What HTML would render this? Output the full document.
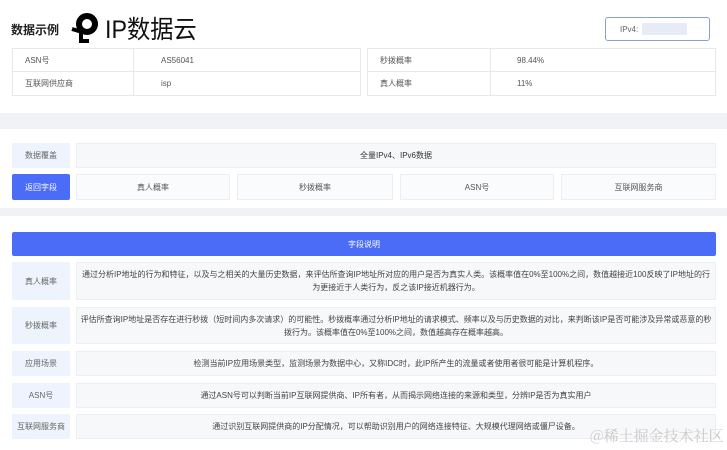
<!DOCTYPE html>
<html><head><meta charset="utf-8"><style>
*{box-sizing:border-box;margin:0;padding:0}
body{width:727px;height:450px;background:#fff;font-family:"Liberation Sans","Noto Sans CJK SC",sans-serif;color:#555;font-size:8px;position:relative;overflow:hidden}
.a{position:absolute}
.c{display:flex;align-items:center}
.cc{display:flex;align-items:center;justify-content:center;text-align:center}
.lab{background:#eef4fd;color:#666}
.box{background:#f7f8fa;border:1px solid #eceef2}
</style></head><body>
<div class="a" style="left:11px;top:21px;font-size:12px;font-weight:bold;color:#222">数据示例</div>
<svg class="a" style="left:70px;top:11px" width="32" height="32" viewBox="0 0 32 32">
<circle cx="17" cy="13" r="8" stroke="#000" stroke-width="6" fill="none"/>
<path d="M2 18l10 3" stroke="#000" stroke-width="4"/>
<path d="M11 22v8h8" stroke="#000" stroke-width="4" fill="none"/>
</svg>
<div class="a" style="left:105px;top:10px;font-size:25px;color:#111;transform:scaleX(0.93);transform-origin:left">IP数据云</div>
<div class="a cc" style="left:605px;top:17px;width:105px;height:24px;border:1px solid #8aa0d0;border-radius:3px;justify-content:flex-start;padding-left:14px;color:#666">IPv4:<span style="display:inline-block;width:45px;height:12px;background:#e6ecf6;margin-left:4px"></span></div>
<div class="a" style="left:12px;top:48px;width:349px;height:48px;border:1px solid #e8e8e8">
 <div class="a c" style="left:0;top:0;width:121px;height:23px;border-right:1px solid #e8e8e8;border-bottom:1px solid #e8e8e8;padding-left:12px">ASN号</div>
 <div class="a c" style="left:121px;top:0;width:227px;height:23px;border-bottom:1px solid #e8e8e8;padding-left:27px">AS56041</div>
 <div class="a c" style="left:0;top:23px;width:121px;height:23px;border-right:1px solid #e8e8e8;padding-left:12px">互联网供应商</div>
 <div class="a c" style="left:121px;top:23px;width:227px;height:23px;padding-left:27px">isp</div>
</div>
<div class="a" style="left:367px;top:48px;width:349px;height:48px;border:1px solid #e8e8e8">
 <div class="a c" style="left:0;top:0;width:123px;height:23px;border-right:1px solid #e8e8e8;border-bottom:1px solid #e8e8e8;padding-left:12px">秒拨概率</div>
 <div class="a c" style="left:123px;top:0;width:225px;height:23px;border-bottom:1px solid #e8e8e8;padding-left:26px">98.44%</div>
 <div class="a c" style="left:0;top:23px;width:123px;height:23px;border-right:1px solid #e8e8e8;padding-left:12px">真人概率</div>
 <div class="a c" style="left:123px;top:23px;width:225px;height:23px;padding-left:26px">11%</div>
</div>
<div class="a" style="left:0;top:113px;width:727px;height:16px;background:#f1f2f5"></div>
<div class="a cc lab" style="left:12px;top:143px;width:58px;height:25px">数据覆盖</div>
<div class="a cc box" style="left:76px;top:143px;width:640px;height:25px;color:#333">全量IPv4、IPv6数据</div>
<div class="a cc" style="left:12px;top:174px;width:58px;height:26px;background:#4a6cf7;color:#fff;border-radius:2px">返回字段</div>
<div class="a cc box" style="left:76px;top:174px;width:154px;height:26px;background:#fafbfc">真人概率</div>
<div class="a cc box" style="left:237px;top:174px;width:156px;height:26px;background:#fafbfc">秒拨概率</div>
<div class="a cc box" style="left:400px;top:174px;width:154px;height:26px;background:#fafbfc">ASN号</div>
<div class="a cc box" style="left:561px;top:174px;width:155px;height:26px;background:#fafbfc">互联网服务商</div>
<div class="a" style="left:0;top:208px;width:727px;height:8px;background:#f1f2f5"></div>
<div class="a cc" style="left:12px;top:232px;width:704px;height:24px;background:#4a6cf7;color:#fff;border-radius:2px">字段说明</div>
<div class="a cc lab" style="left:12px;top:262px;width:58px;height:38px">真人概率</div>
<div class="a cc box" style="left:76px;top:262px;width:640px;height:38px;line-height:13px;padding:0 2px;color:#444">通过分析IP地址的行为和特征，以及与之相关的大量历史数据，来评估所查询IP地址所对应的用户是否为真实人类。该概率值在0%至100%之间，数值越接近100反映了IP地址的行为更接近于人类行为，反之该IP接近机器行为。</div>
<div class="a cc lab" style="left:12px;top:307px;width:58px;height:37px">秒拨概率</div>
<div class="a cc box" style="left:76px;top:307px;width:640px;height:37px;line-height:13px;padding:0 1px;color:#444">评估所查询IP地址是否存在进行秒拨（短时间内多次请求）的可能性。秒拨概率通过分析IP地址的请求模式、频率以及与历史数据的对比，来判断该IP是否可能涉及异常或恶意的秒拨行为。该概率值在0%至100%之间，数值越高存在概率越高。</div>
<div class="a cc lab" style="left:12px;top:351px;width:58px;height:25px">应用场景</div>
<div class="a cc box" style="left:76px;top:351px;width:640px;height:25px;color:#444">检测当前IP应用场景类型，监测场景为数据中心，又称IDC时，此IP所产生的流量或者使用者很可能是计算机程序。</div>
<div class="a cc lab" style="left:12px;top:383px;width:58px;height:25px">ASN号</div>
<div class="a cc box" style="left:76px;top:383px;width:640px;height:25px;color:#444">通过ASN号可以判断当前IP互联网提供商、IP所有者，从而揭示网络连接的来源和类型，分辨IP是否为真实用户</div>
<div class="a cc lab" style="left:12px;top:414px;width:58px;height:25px">互联网服务商</div>
<div class="a cc box" style="left:76px;top:414px;width:640px;height:25px;color:#444">通过识别互联网提供商的IP分配情况，可以帮助识别用户的网络连接特征、大规模代理网络或僵尸设备。</div>
<div class="a" style="left:590px;top:425px;font-size:15px;color:#c9c9c9;font-family:'Noto Serif CJK SC',serif">@稀土掘金技术社区</div>
</body></html>
